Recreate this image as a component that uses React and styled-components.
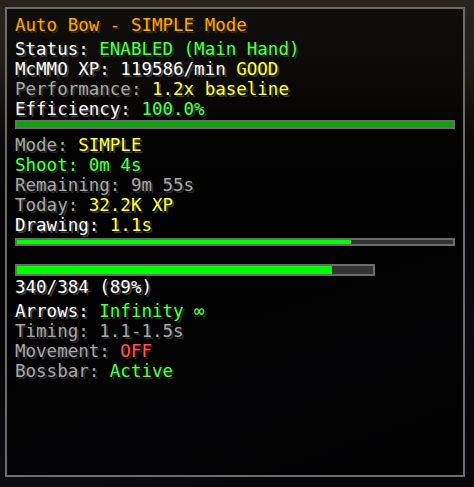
import React from "react";
import styled, { createGlobalStyle } from "styled-components";

const GlobalStyle = createGlobalStyle`
  html, body {
    margin: 0;
    padding: 0;
    background: #050506;
  }
  #root {
    width: 474px;
    height: 487px;
  }
`;

const TONES = {
  gold: ["#FFAA00", "#3f2a00"],
  white: ["#FFFFFF", "#3f3f3f"],
  gray: ["#AAAAAA", "#2a2a2a"],
  green: ["#55FF55", "#153f15"],
  yellow: ["#FFFF55", "#3f3f15"],
  red: ["#FF5555", "#3f1515"],
};

const Screen = styled.div`
  width: 474px;
  height: 487px;
  overflow: hidden;
  box-sizing: border-box;
  padding: 7px 0 0 5px;
  background:
    linear-gradient(160deg, rgba(255, 255, 255, 0) 55%, rgba(30, 30, 40, 0.25) 75%, rgba(0, 0, 0, 0) 90%),
    linear-gradient(180deg, #2a241e 0px, #221d18 60px, #0b0a09 135px, #050506 200px, #060609 480px);
`;

const Panel = styled.div`
  box-sizing: border-box;
  width: 460px;
  height: 470px;
  border: 2px solid #6c6c6c;
  background: rgba(0, 0, 0, 0.6);
  padding: 5.6px 8px 0 8px;
  display: flex;
  flex-direction: column;
  align-items: flex-start;
  font-family: "DejaVu Sans Mono", "Liberation Mono", monospace;
  font-size: 17.5px;
`;

const Line = styled.div`
  line-height: 20px;
  height: 20px;
  white-space: nowrap;
  margin-top: ${(p) => p.$mt || 0}px;
`;

const Seg = styled.span`
  color: ${(p) => TONES[p.$tone][0]};
  text-shadow: 2px 2px 0 ${(p) => TONES[p.$tone][1]};
`;

const Bar = styled.div`
  box-sizing: border-box;
  width: ${(p) => p.$w}px;
  height: ${(p) => p.$h}px;
  margin-top: ${(p) => p.$mt || 0}px;
  border: 2px solid #6c6c6c;
  background: #333333;
  flex: none;
`;

const Fill = styled.div`
  height: 100%;
  width: ${(p) => p.$pct}%;
  background: ${(p) => p.$color};
`;

const rows1 = [
  [["white", "Status: "], ["green", "ENABLED (Main Hand)"]],
  [["white", "McMMO XP: 119586/min "], ["yellow", "GOOD"]],
  [["gray", "Performance: "], ["yellow", "1.2x baseline"]],
  [["white", "Efficiency: "], ["green", "100.0%"]],
];

const rows2 = [
  [["gray", "Mode: "], ["yellow", "SIMPLE"]],
  [["green", "Shoot: 0m 4s"]],
  [["gray", "Remaining: 9m 55s"]],
  [["gray", "Today: "], ["yellow", "32.2K XP"]],
  [["white", "Drawing: "], ["yellow", "1.1s"]],
];

const rows3 = [
  [["white", "Arrows: "], ["green", "Infinity ∞"]],
  [["gray", "Timing: 1.1-1.5s"]],
  [["gray", "Movement: "], ["red", "OFF"]],
  [["gray", "Bossbar: "], ["green", "Active"]],
];

const renderRows = (rows, firstMt) =>
  rows.map((segs, i) => (
    <Line key={i} $mt={i === 0 ? firstMt : 0}>
      {segs.map(([tone, text], j) => (
        <Seg key={j} $tone={tone}>
          {text}
        </Seg>
      ))}
    </Line>
  ));

export default function App() {
  return (
    <>
      <GlobalStyle />
      <Screen>
        <Panel>
          <Line>
            <Seg $tone="gold">Auto Bow - SIMPLE Mode</Seg>
          </Line>
          {renderRows(rows1, 4)}
          <Bar $w={440} $h={9} $mt={1.4}>
            <Fill $pct={100} $color="#00AA00" />
          </Bar>
          {renderRows(rows2, 5.6)}
          <Bar $w={440} $h={8} $mt={3}>
            <Fill $pct={76.6} $color="#00FF00" />
          </Bar>
          <Bar $w={360} $h={12} $mt={18}>
            <Fill $pct={88.5} $color="#00FF00" />
          </Bar>
          <Line $mt={1}>
            <Seg $tone="white">340/384 (89%)</Seg>
          </Line>
          {renderRows(rows3, 4)}
        </Panel>
      </Screen>
    </>
  );
}
